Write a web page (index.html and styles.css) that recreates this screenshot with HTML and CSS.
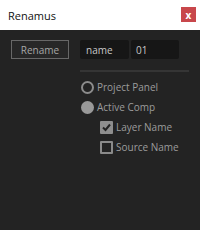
FILE: index.html
```html
<!DOCTYPE html>
<html>
<head>
<meta charset="utf-8">
<link rel="stylesheet" href="styles.css">
</head>
<body>
<div class="window">
  <div class="titlebar">
    <span class="title">Renamus</span>
    <span class="close">x</span>
  </div>
  <div class="content">
    <div class="left">
      <div class="btn">Rename</div>
    </div>
    <div class="right">
      <div class="fields">
        <div class="field f1">name</div>
        <div class="field f2">01</div>
      </div>
      <div class="sep"></div>
      <div class="options">
        <div class="row"><span class="radio"></span><span class="label">Project Panel</span></div>
        <div class="row"><span class="radio on"></span><span class="label">Active Comp</span></div>
        <div class="row sub"><span class="check on"><svg width="13" height="13" viewBox="0 0 13 13"><path d="M3 6.5 L5.5 9 L10 3.5" fill="none" stroke="#232323" stroke-width="2"/></svg></span><span class="label">Layer Name</span></div>
        <div class="row sub"><span class="check"></span><span class="label">Source Name</span></div>
      </div>
    </div>
  </div>
</div>
</body>
</html>
```
FILE: styles.css
```css
html, body {
  margin: 0;
  padding: 0;
  background: #232323;
}
.window {
  width: 200px;
  height: 230px;
  font-family: "Open Sans", "Liberation Sans", sans-serif;
}
.titlebar {
  height: 30px;
  background: #ffffff;
  display: flex;
  align-items: center;
  justify-content: space-between;
  padding: 0 3px 0 8px;
  box-sizing: border-box;
}
.title {
  font-size: 11px;
  color: #111;
  margin-top: 1px;
}
.close {
  width: 15px;
  height: 15px;
  background: #c8474b;
  color: #fff;
  font-size: 10px;
  font-weight: bold;
  display: flex;
  align-items: center;
  justify-content: center;
  line-height: 1;
  margin-top: -1px;
  margin-right: 1px;
}
.content {
  display: flex;
  padding-top: 10px;
}
.left {
  width: 80px;
  padding-left: 11px;
  box-sizing: border-box;
}
.btn {
  width: 58px;
  height: 19px;
  box-sizing: border-box;
  border: 1px solid #686868;
  background: #272727;
  color: #a6a6a6;
  font-size: 10px;
  display: flex;
  align-items: center;
  justify-content: center;
}
.right {
  width: 109px;
}
.fields {
  display: flex;
  gap: 2px;
}
.field {
  height: 19px;
  background: #161616;
  border-radius: 2px;
  color: #c8c8c8;
  font-size: 10px;
  display: flex;
  align-items: center;
  padding-left: 6px;
  box-sizing: border-box;
}
.f1 { width: 49px; }
.f2 { width: 48px; padding-left: 5px; }
.sep {
  margin-top: 11px;
  height: 2px;
  background: #353535;
}
.options {
  margin-top: 5px;
}
.row {
  height: 20px;
  display: flex;
  align-items: center;
  margin-left: 1px;
}
.row.sub {
  margin-left: 20px;
}
.radio {
  width: 13px;
  height: 13px;
  box-sizing: border-box;
  border: 2px solid #8c8c8c;
  border-radius: 50%;
}
.radio.on {
  border: none;
  background: #999999;
}
.check {
  width: 13px;
  height: 13px;
  box-sizing: border-box;
  border: 2px solid #8a8a8a;
  border-radius: 1px;
  display: flex;
}
.check.on {
  border: none;
  background: #8e8e8e;
}
.label {
  margin-left: 3px;
  font-size: 10px;
  color: #9c9c9c;
}
```
